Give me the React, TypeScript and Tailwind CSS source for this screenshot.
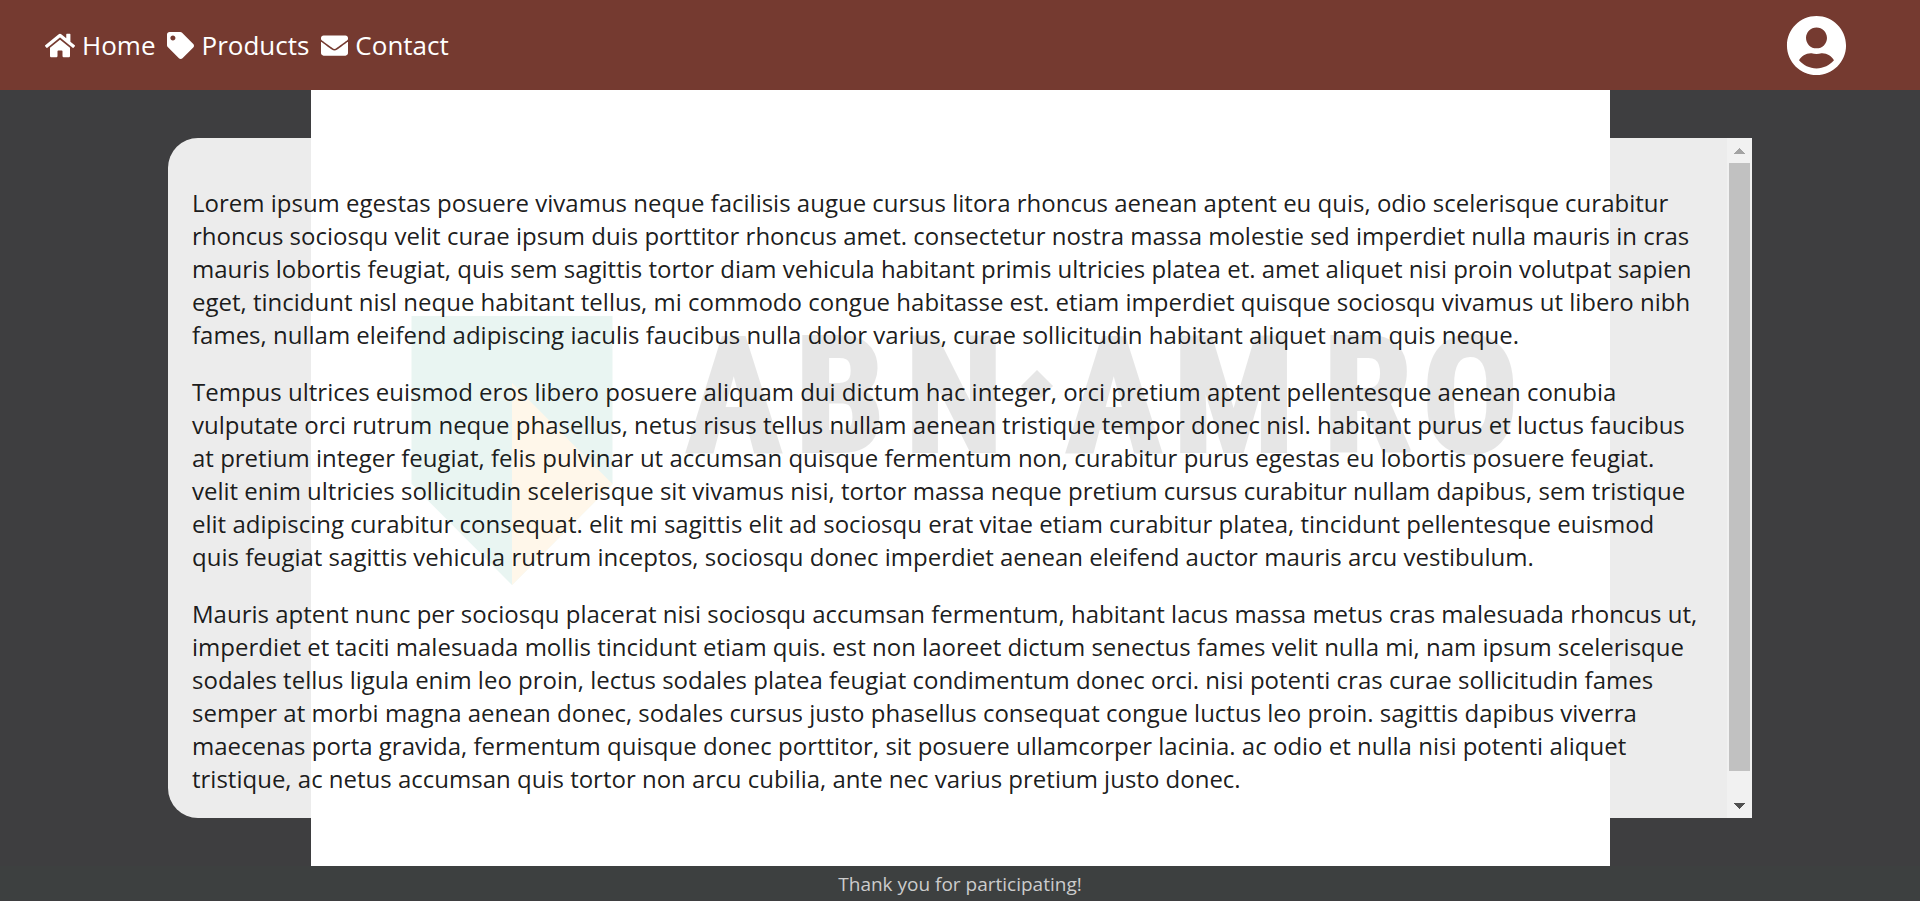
import { FaEnvelope, FaHome, FaTag, FaUserCircle } from "react-icons/fa";

const links = [
  { label: "Home", href: "#home", Icon: FaHome, size: "h-[27px] w-[30px]" },
  { label: "Products", href: "#products", Icon: FaTag, size: "h-[27px] w-[27px]" },
  { label: "Contact", href: "#contact", Icon: FaEnvelope, size: "h-[27px] w-[27px]" },
];

const paragraphs = [
  "Lorem ipsum egestas posuere vivamus neque facilisis augue cursus litora rhoncus aenean aptent eu quis, odio scelerisque curabitur rhoncus sociosqu velit curae ipsum duis porttitor rhoncus amet. consectetur nostra massa molestie sed imperdiet nulla mauris in cras mauris lobortis feugiat, quis sem sagittis tortor diam vehicula habitant primis ultricies platea et. amet aliquet nisi proin volutpat sapien eget, tincidunt nisl neque habitant tellus, mi commodo congue habitasse est. etiam imperdiet quisque sociosqu vivamus ut libero nibh fames, nullam eleifend adipiscing iaculis faucibus nulla dolor varius, curae sollicitudin habitant aliquet nam quis neque.",
  "Tempus ultrices euismod eros libero posuere aliquam dui dictum hac integer, orci pretium aptent pellentesque aenean conubia vulputate orci rutrum neque phasellus, netus risus tellus nullam aenean tristique tempor donec nisl. habitant purus et luctus faucibus at pretium integer feugiat, felis pulvinar ut accumsan quisque fermentum non, curabitur purus egestas eu lobortis posuere feugiat. velit enim ultricies sollicitudin scelerisque sit vivamus nisi, tortor massa neque pretium cursus curabitur nullam dapibus, sem tristique elit adipiscing curabitur consequat. elit mi sagittis elit ad sociosqu erat vitae etiam curabitur platea, tincidunt pellentesque euismod quis feugiat sagittis vehicula rutrum inceptos, sociosqu donec imperdiet aenean eleifend auctor mauris arcu vestibulum.",
  "Mauris aptent nunc per sociosqu placerat nisi sociosqu accumsan fermentum, habitant lacus massa metus cras malesuada rhoncus ut, imperdiet et taciti malesuada mollis tincidunt etiam quis. est non laoreet dictum senectus fames velit nulla mi, nam ipsum scelerisque sodales tellus ligula enim leo proin, lectus sodales platea feugiat condimentum donec orci. nisi potenti cras curae sollicitudin fames semper at morbi magna aenean donec, sodales cursus justo phasellus consequat congue luctus leo proin. sagittis dapibus viverra maecenas porta gravida, fermentum quisque donec porttitor, sit posuere ullamcorper lacinia. ac odio et nulla nisi potenti aliquet tristique, ac netus accumsan quis tortor non arcu cubilia, ante nec varius pretium justo donec.",
];

const logoLetters = [
  { char: "A", x: 375 },
  { char: "B", x: 484 },
  { char: "N", x: 594 },
  { char: "A", x: 755 },
  { char: "M", x: 862 },
  { char: "R", x: 1012 },
  { char: "O", x: 1111 },
];

function Backdrop() {
  return (
    <svg
      className="absolute inset-0 h-full w-full"
      viewBox="0 0 1298 776"
      preserveAspectRatio="xMidYMid meet"
      aria-label="ABN AMRO"
      role="img"
    >
      <rect width="1299" height="776" fill="#fff" />
      <path d="M100.500 226H301.500V394L201 495L100.500 394Z" fill="#239b7d" />
      <path d="M201 293L301.500 394L201 495Z" fill="#ffaf28" />
      {logoLetters.map(({ char, x }) => (
        <text
          key={x}
          x={x}
          y="361"
          fontSize="160"
          fontWeight="700"
          fill="#050505"
          stroke="#050505"
          strokeWidth="4"
          className="font-['Liberation_Sans_Narrow','Roboto_Condensed',sans-serif]"
        >
          {char}
        </text>
      ))}
      <path d="M726 280L742 296L726 312L710 296Z" fill="#050505" />
    </svg>
  );
}

function ScrollTrack() {
  return (
    <div className="flex w-[25px] shrink-0 flex-col bg-[#f1f1f1] px-0.5" aria-hidden="true">
      <div className="flex h-[25px] items-center justify-center">
        <svg width="11" height="6" viewBox="0 0 11 6" shapeRendering="crispEdges">
          <path d="M0 6L5.500 0L11 6Z" fill="#a3a3a3" />
        </svg>
      </div>
      <div className="flex flex-1 flex-col">
        <div className="h-[608px] bg-[#c1c1c1]" />
      </div>
      <div className="flex h-[25px] items-center justify-center">
        <svg width="11" height="6" viewBox="0 0 11 6" shapeRendering="crispEdges">
          <path d="M0 0L5.500 6L11 0Z" fill="#505050" />
        </svg>
      </div>
    </div>
  );
}

export default function App() {
  return (
    <div className="flex h-screen flex-col bg-[#3e3e40] pb-px font-['Open_Sans',sans-serif]">
      <header className="flex h-[90px] shrink-0 items-center justify-between bg-[#753a30] pr-[73px] pl-[45px] text-white">
        <nav className="flex items-center gap-3 text-[26px]">
          {links.map(({ label, href, Icon, size }) => (
            <a key={label} href={href} className="flex items-center gap-[7px]">
              <Icon className={size} aria-hidden="true" />
              {label}
            </a>
          ))}
        </nav>
        <button type="button" aria-label="Account">
          <FaUserCircle className="h-[61px] w-auto" />
        </button>
      </header>

      <main className="relative min-h-0 flex-1 overflow-hidden px-[168px] py-12">
        <Backdrop />
        <section className="relative flex h-full overflow-hidden rounded-l-[30px] bg-white/90">
          <div className="flex-1 overflow-hidden p-6 text-2xl leading-[33px] text-black/90">
            {paragraphs.map((text) => (
              <p key={text.slice(0, 6)} className="my-6">
                {text}
              </p>
            ))}
          </div>
          <ScrollTrack />
        </section>
      </main>

      <footer className="h-[34px] shrink-0 bg-[#3d4040] text-center text-[19px] leading-[36px] text-[#cccccc]">
        Thank you for participating!
      </footer>
    </div>
  );
}
